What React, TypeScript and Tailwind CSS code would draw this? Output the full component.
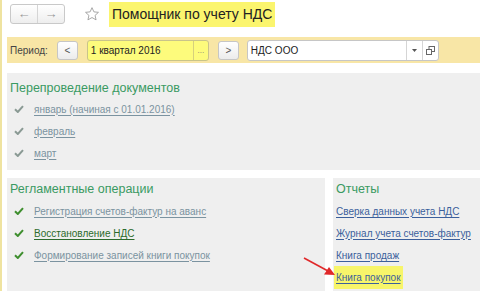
const font = { fontFamily: '"Liberation Sans", Arial, sans-serif' };

function Tick({ green }: { green?: boolean }) {
  return (
    <svg width="10" height="8" viewBox="0 0 10 8" className="shrink-0">
      <path d="M1 4.2 L3.8 7 L9 1.2" fill="none" stroke={green ? "#3f8f2f" : "#8a9a94"} strokeWidth="2" />
    </svg>
  );
}

function Item({ text, color = "#7b93a0", green }: { text: string; color?: string; green?: boolean }) {
  return (
    <div className="flex items-center h-[22px] pl-[4px] gap-[10px]">
      <Tick green={green} />
      <span className="text-[10px] underline underline-offset-2 whitespace-nowrap" style={{ color }}>{text}</span>
    </div>
  );
}

export default function App() {
  return (
    <div className="w-[480px] h-[291px] bg-white overflow-hidden border-l-2 border-[#efe3a0] relative" style={font}>
      {/* header */}
      <div className="flex items-center h-[31px]">
        <div className="ml-[8px] mt-[-3px] flex w-[55px] h-[20px] border border-[#c9c9c9] rounded-[3px] bg-gradient-to-b from-white to-[#eeeeee]">
          <div className="flex-1 flex items-center justify-center text-[#9a9a9a] text-[13px] border-r border-[#d5d5d5]">←</div>
          <div className="flex-1 flex items-center justify-center text-[#9a9a9a] text-[13px]">→</div>
        </div>
        <svg width="16" height="16" viewBox="0 0 24 24" className="ml-[19px] mt-[-3px]">
          <path d="M12 2.5 l2.9 6.3 6.8.7 -5.1 4.6 1.5 6.7 -6.1-3.5 -6.1 3.5 1.5-6.7 -5.1-4.6 6.8-.7z" fill="none" stroke="#9a9a9a" strokeWidth="1.3" strokeLinejoin="round" />
        </svg>
        <div className="ml-[9px] mt-[-3px] h-[25px] px-[3px] flex items-center bg-[#fbf56e] text-[14px] text-[#222] whitespace-nowrap">Помощник по учету НДС</div>
      </div>

      {/* period bar */}
      <div className="mt-[6px] ml-[5px] h-[26px] bg-[#f8e6a6] flex items-center text-[10px] text-[#444]">
        <span className="ml-[3px]">Период:</span>
        <div className="ml-[9px] w-[21px] h-[19px] border border-[#c6c6c6] rounded-[3px] bg-gradient-to-b from-white to-[#ececec] flex items-center justify-center text-[#555]">&lt;</div>
        <div className="ml-[9px] w-[122px] h-[21px] border border-[#c9c48a] rounded-[3px] bg-[#fdfb7c] flex text-[#222]">
          <span className="flex-1 flex items-center pl-[3px]">1 квартал 2016</span>
          <span className="w-[15px] border-l border-[#d6d07c] flex items-end justify-center pb-[3px] text-[8px] text-[#777]">...</span>
        </div>
        <div className="ml-[9px] w-[21px] h-[19px] border border-[#c6c6c6] rounded-[3px] bg-gradient-to-b from-white to-[#ececec] flex items-center justify-center text-[#555]">&gt;</div>
        <div className="ml-[8px] w-[192px] h-[21px] border border-[#c6c6c6] rounded-[3px] bg-white flex text-[#222]">
          <span className="flex-1 flex items-center pl-[3px]">НДС ООО</span>
          <span className="w-[16px] border-l border-[#d5d5d5] flex items-center justify-center">
            <svg width="5" height="3" viewBox="0 0 5 3"><path d="M0 0 H5 L2.5 3z" fill="#555" /></svg>
          </span>
          <span className="w-[16px] border-l border-[#d5d5d5] flex items-center justify-center">
            <svg width="9" height="9" viewBox="0 0 9 9">
              <rect x="3" y="0.5" width="5.5" height="5" fill="none" stroke="#666" strokeWidth="1" />
              <rect x="0.5" y="3.5" width="5" height="5" fill="white" stroke="#666" strokeWidth="1" />
            </svg>
          </span>
        </div>
      </div>

      {/* section 1 */}
      <div className="mt-[10px] ml-[5px] h-[97px] bg-[#efefef] pt-[5px] pl-[3px]">
        <div className="text-[12.5px] text-[#3a9a62] h-[20px] flex items-center">Перепроведение документов</div>
        <Item text="январь (начиная с 01.01.2016)" />
        <Item text="февраль" />
        <Item text="март" />
      </div>

      {/* section 2 */}
      <div className="mt-[8px] ml-[5px] flex h-[113px]">
        <div className="w-[318px] bg-[#efefef] pl-[3px]">
          <div className="text-[12.5px] text-[#3a9a62] h-[22px] flex items-center">Регламентные операции</div>
          <Item text="Регистрация счетов-фактур на аванс" green />
          <Item text="Восстановление НДС" color="#2c6b2c" green />
          <Item text="Формирование записей книги покупок" green />
        </div>
        <div className="ml-[8px] flex-1 bg-[#efefef] pl-[3px] text-[10px] text-[#3b5f9c] whitespace-nowrap">
          <div className="text-[12.5px] text-[#3a9a62] h-[22px] flex items-center">Отчеты</div>
          <div className="h-[22px] flex items-center underline underline-offset-2">Сверка данных учета НДС</div>
          <div className="h-[22px] flex items-center underline underline-offset-2">Журнал учета счетов-фактур</div>
          <div className="h-[22px] flex items-center underline underline-offset-2">Книга продаж</div>
          <div className="h-[22px] flex items-center">
            <span className="bg-[#f7f56a] px-[2px] py-[4px] -ml-[2px] underline underline-offset-2">Книга покупок</span>
          </div>
        </div>
      </div>

      {/* red arrow */}
      <svg className="absolute left-[300px] top-[256px]" width="36" height="22" viewBox="0 0 36 22">
        <path d="M2 2 L26 15" stroke="#e0282a" strokeWidth="1.6" />
        <path d="M33 19 L22 18.5 L27 11z" fill="#e0282a" />
      </svg>
    </div>
  );
}
